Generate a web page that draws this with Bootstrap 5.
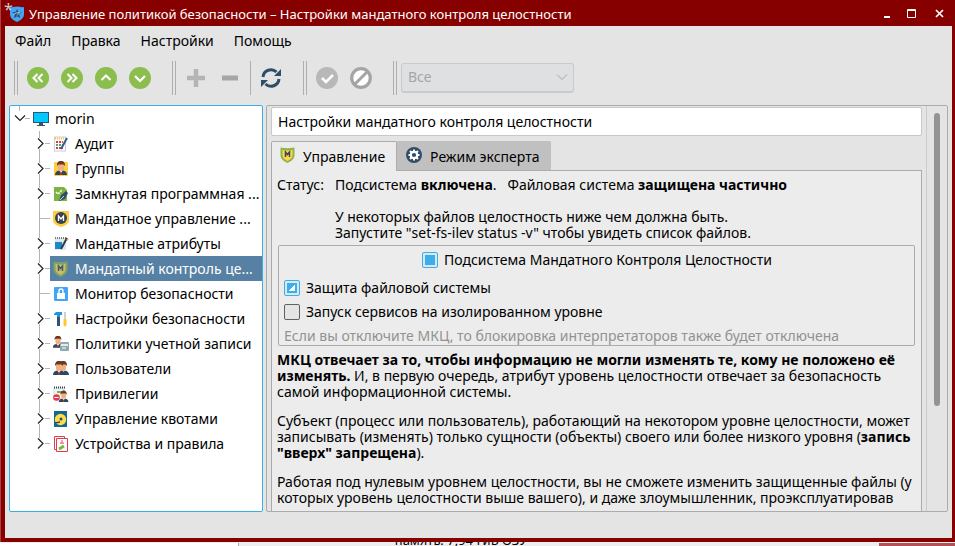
<!DOCTYPE html>
<html lang="ru">
<head>
<meta charset="utf-8">
<meta name="viewport" content="width=device-width, initial-scale=1">
<title>Управление политикой безопасности</title>
<link href="https://cdn.jsdelivr.net/npm/bootstrap@5.3.0/dist/css/bootstrap.min.css" rel="stylesheet">
<style>
:root{--win:#e4e4e4;--pane:#ececec;--edge:#acacac;--blue:#3daee9;--red:#870000}
body{font-family:"Noto Sans","DejaVu Sans",sans-serif;font-size:14px;line-height:16px;color:#000;background:var(--win)}
button{color:inherit;font:inherit}
svg{display:block;flex:none}
.window{min-height:0;background:var(--win);border:solid var(--red);border-width:0 3px 4px 4px;outline:1px solid #b04040;margin-left:1px}
.title-bar{background:var(--red);color:#fff;height:26px;margin-left:-4px;padding:2px 4px 0 0;font-size:13px;flex:none}
.modified{color:#ccc;left:3px;top:1px;font-size:16px}
.plain{background:none;border:0;padding:0}
.menu-bar{height:30px;padding:0 10px;gap:20px;flex:none}
.tool-bar{height:43px;padding:0 9px;flex:none}
.tool-bar .plain{width:24px;height:24px;display:flex;align-items:center;justify-content:center}
.tools{gap:10px}
.grip{width:4px;height:34px;border:solid #acaeb0;border-width:0 1px;margin:0 8px 0 20px}
.grip:first-child{margin-left:0}
.grip:nth-last-child(2){margin-right:4px}
.rule{width:1px;height:34px;background:#acaeb0;margin:0 8px}
.filter{--bs-form-select-bg-img:url("data:image/svg+xml,%3csvg xmlns='http://www.w3.org/2000/svg' viewBox='0 0 12 12'%3e%3cpath d='M1 3.500l5 5 5-5' fill='none' stroke='%23a4a6a8'/%3e%3c/svg%3e");width:173px;height:30px;padding:2px 6px;font-size:14px;line-height:16px;border:1px solid #c8cacc;border-bottom-width:2px;border-radius:3px;color:#a4a6a8;background-color:#dfe0e2!important;background-image:var(--bs-form-select-bg-img);background-position:right 5px center;background-size:12px;opacity:1}
.work{padding:6px 4px 0;gap:3px}
.tree{width:254px;background:#fff;border:1px solid var(--blue);border-radius:2px}
.tree li,.tree-row{height:25px}
.tree-row{width:100%;gap:6px;padding-left:3px;text-align:left;overflow:hidden;white-space:nowrap}
.chosen{background:#5681a4;color:#fff}
.frame{border:1px solid var(--edge);border-radius:2px;overflow:hidden}
.content{padding:1px 4px 0}
.heading-box{height:29px;padding:0 6px;border:1px solid #c8c8c8;border-radius:2px;font-size:14px;color:#000}
.heading-box:focus{box-shadow:none}
.tabs{margin-top:5px}
.tab{height:30px;gap:8px;padding:1px 11px 0 8px;border:1px solid var(--edge);border-bottom:0;border-radius:2px 2px 0 0}
.tab-on{background:var(--pane);margin-bottom:-1px;position:relative}
.tab-off{background:#c0c0c0;border-color:#c0c0c0;height:29px;border-radius:0 2px 0 0}
.sheet{background:var(--pane);border:1px solid var(--edge);padding:6px 6px 0 5px}
.state{gap:11px}
.group{border:1px solid var(--edge);border-radius:2px;margin:4px 0 6px 1px;height:101px;padding:6px 4px 0 5px}
.group .form-check{min-height:0;padding:0;margin:0 0 8px;gap:6px}
.group .form-check:first-child{margin-bottom:12px}
.group .form-check-input{width:16px;height:16px;margin:0;float:none;border:1px solid #5f6163;border-radius:2px;background-color:#e4e4e4;flex:none}
.group .form-check-input:checked{border-color:var(--blue);background:linear-gradient(var(--blue),var(--blue)) center/10px 10px no-repeat #d8e9f3}
.group .part:checked{background:linear-gradient(135deg,var(--blue) 50%,#fff 50%) center/6px 6px no-repeat,linear-gradient(var(--blue),var(--blue)) center/10px 10px no-repeat #d8e9f3}
.hint{color:#929292}
.prose p{margin-bottom:13px}
.scroll{width:21px;border-left:1px solid #ccc;padding:7px 0}
.thumb{width:6px;height:75%;border-radius:3px;background:#949494}
.status{height:26px;flex:none}
.behind{height:4px;padding-top:1px;background:#eee;overflow:hidden;flex:none}
.behind-a{width:25%;background:#fff;border-right:1px solid #aaa}
.behind-b{padding-left:156px;font-size:13px;line-height:16px;margin-top:-11px}
.behind-c{width:8%;background:#b35058}
</style>
<script src="https://cdn.jsdelivr.net/npm/bootstrap@5.3.0/dist/js/bootstrap.bundle.min.js"></script>
</head>
<body class="vh-100 d-flex flex-column overflow-hidden">
<svg width="0" height="0" class="position-absolute" aria-hidden="true">
<defs>
<g id="branch"><path d="M9.500 0v7M9.500 18v7M15 12.500h5" stroke="#b4b4b4" fill="none"/><path d="M8 7.500l5 5-5 5" stroke="#222" fill="none" stroke-width="1.200"/></g>
<g id="last"><path d="M9.500 0v7M15 12.500h5" stroke="#b4b4b4" fill="none"/><path d="M8 7.500l5 5-5 5" stroke="#222" fill="none" stroke-width="1.200"/></g>
<g id="leaf"><path d="M9.500 0v25M10 12.500h10" stroke="#b4b4b4" fill="none"/></g>
<g id="man"><path d="M1 15c0-3 2-4 4-4.500h4c2 .5 4 1.500 4 4.500z" fill="#2b4862"/><path d="M5 10h4l-2 3z" fill="#fff"/><path d="M7 11l1 4H6z" fill="#c33"/><rect x="4" y="3" width="6" height="8" rx="3" fill="#f2b07e"/><path d="M3 6c-.5-7 8.500-7 8 0L9.500 4.500h-5z" fill="#6b3a22"/></g>
<g id="mshield"><path d="M.5.5Q7.500 2 14.500.5V8c0 4-3 6-7 8C3.500 14 .5 12 .5 8z" fill="#8cb54c"/><path d="M2.500 2.800Q7.500 4 12.500 2.800V8c0 3-2 4.500-5 6-3-1.500-5-3-5-6z" fill="#ffd54a"/><path d="M5.500 10V5l2 2.500 2-2.500v5" fill="none" stroke="#34495e" stroke-width="1.500"/></g>
</defs>
</svg>

<main class="window flex-grow-1 d-flex flex-column">
<header class="title-bar d-flex align-items-center position-relative">
  <span class="modified position-absolute">*</span>
  <svg class="ms-2" width="16" height="16" viewBox="0 0 16 16"><path d="M1 1c3 .6 5-.4 7-.5 2 .1 4 1.100 7 .5v7c0 4-3 6-7 8-4-2-7-4-7-8z" fill="#42a5f5"/><path d="M8 3l1.400 3 3.400.3-2.500 2.300.8 3.400L8 10.300 4.900 12l.8-3.400-2.500-2.300L6.600 6z" fill="#2f4d68"/><path d="M4 9l3-2 4-.5-3 3" fill="none" stroke="#9dccec"/></svg>
  <span class="ms-1 flex-grow-1 text-nowrap">Управление политикой безопасности – Настройки мандатного контроля целостности</span>
  <button class="plain ms-2" aria-label="Свернуть"><svg width="20" height="20"><path d="M8 12h6v2H8z" fill="#fff"/></svg></button>
  <button class="plain ms-1" aria-label="Развернуть"><svg width="20" height="20"><path d="M7.500 5.500h8v8h-8zM7 6.500h9" fill="none" stroke="#fff"/></svg></button>
  <button class="plain ms-2" aria-label="Закрыть"><svg width="20" height="20"><path d="M8 6l7 7M15 6l-7 7" stroke="#fff" stroke-width="1.700"/></svg></button>
</header>

<nav class="menu-bar d-flex align-items-center">
  <button class="plain">Файл</button><button class="plain">Правка</button><button class="plain">Настройки</button><button class="plain">Помощь</button>
</nav>

<div class="tool-bar d-flex align-items-center">
  <div class="grip"></div>
  <div class="tools d-flex">
  <button class="plain" aria-label="В начало"><svg width="22" height="22" viewBox="0 0 22 22"><circle cx="11" cy="11" r="11" fill="#8bbd4f"/><path d="M10.500 7l-4 4 4 4M15.500 7l-4 4 4 4" fill="none" stroke="#fff" stroke-width="2"/></svg></button>
  <button class="plain" aria-label="В конец"><svg width="22" height="22" viewBox="0 0 22 22"><circle cx="11" cy="11" r="11" fill="#8bbd4f"/><path d="M6.500 7l4 4-4 4M11.500 7l4 4-4 4" fill="none" stroke="#fff" stroke-width="2"/></svg></button>
  <button class="plain" aria-label="Вверх"><svg width="22" height="22" viewBox="0 0 22 22"><circle cx="11" cy="11" r="11" fill="#8bbd4f"/><path d="M6.500 13L11 8.500l4.500 4.500" fill="none" stroke="#fff" stroke-width="2"/></svg></button>
  <button class="plain" aria-label="Вниз"><svg width="22" height="22" viewBox="0 0 22 22"><circle cx="11" cy="11" r="11" fill="#8bbd4f"/><path d="M6 9l5 5 5-5" fill="none" stroke="#fff" stroke-width="2.200"/></svg></button>
  </div>
  <div class="grip"></div>
  <div class="tools d-flex">
  <button class="plain" aria-label="Добавить"><svg width="20" height="20"><path d="M10 1v18M1 10h18" stroke="#b4b4b4" stroke-width="4.500"/></svg></button>
  <button class="plain" aria-label="Удалить"><svg width="20" height="20"><path d="M2 10h16" stroke="#a6a6a6" stroke-width="5"/></svg></button>
  </div>
  <div class="rule"></div>
  <button class="plain" aria-label="Обновить"><svg width="22" height="22" viewBox="0 0 22 22"><path d="M3 10a8 8 0 0 1 13.500-5M19 12a8 8 0 0 1-13.500 5" fill="none" stroke="#2f4d68" stroke-width="3"/><path d="M21 2v7h-7zM1 20v-7h7z" fill="#2f4d68"/></svg></button>
  <div class="grip"></div>
  <div class="tools d-flex">
  <button class="plain" aria-label="Применить"><svg width="22" height="22" viewBox="0 0 22 22"><circle cx="11" cy="11" r="11" fill="#b8b8b8"/><path d="M6 11l4 4 7-7" fill="none" stroke="#fff" stroke-width="2.500"/></svg></button>
  <button class="plain" aria-label="Отменить"><svg width="22" height="22" viewBox="0 0 22 22"><circle cx="11" cy="11" r="9.300" fill="#fff" stroke="#a4a4a4" stroke-width="3.200"/><path d="M5 17L17 5" stroke="#a4a4a4" stroke-width="3"/></svg></button>
  </div>
  <div class="grip"></div>
  <select class="form-select filter" disabled aria-label="Фильтр"><option>Все</option></select>
</div>

<div class="work d-flex flex-grow-1 overflow-hidden">
  <ul class="tree list-unstyled mb-0 flex-shrink-0">
    <li class="d-flex"><svg width="20" height="25"><path d="M9.500 0v5M15 12.500h5" stroke="#b4b4b4"/><path d="M5 9.500l5 5 5-5" stroke="#222" stroke-width="1.200" fill="none"/></svg>
      <button class="plain tree-row d-flex align-items-center"><svg width="16" height="16"><rect x=".5" y="1.500" width="15" height="10" fill="#00c8ff" stroke="#2f5570"/><path d="M6 12h4v2h2v1H4v-1h2z" fill="#2f5570"/></svg>morin</button></li>
    <li class="d-flex"><svg width="40" height="25"><use href="#branch" x="20"/></svg><button class="plain tree-row d-flex align-items-center"><svg width="16" height="16"><rect x="1.500" y="1" width="11" height="14" fill="#fff" stroke="#ccd"/><path d="M2 2.500h10" stroke="#f3c34f" stroke-width="2" stroke-dasharray="1 1"/><path d="M3 6h7M3 12h7" stroke="#e53935" stroke-width="2" stroke-dasharray="2 1"/><path d="M3 9h7" stroke="#45a67a" stroke-width="2" stroke-dasharray="2 1"/><path d="M14 2L8 13" stroke="#2f628a" stroke-width="2"/></svg>Аудит</button></li>
    <li class="d-flex"><svg width="40" height="25"><use href="#branch" x="20"/></svg><button class="plain tree-row d-flex align-items-center"><svg width="16" height="16"><rect x="1" y="1" width="14" height="14" rx="1" fill="#ffcc45"/><use href="#man" x="1" y="-1"/></svg>Группы</button></li>
    <li class="d-flex"><svg width="40" height="25"><use href="#branch" x="20"/></svg><button class="plain tree-row d-flex align-items-center"><svg width="16" height="16"><path d="M1 1h10l3 3v11H1z" fill="#7cb342"/><path d="M3 6l2 2 4-4" fill="none" stroke="#fff" stroke-width="1.500" stroke-dasharray="2 1"/><path d="M6 15l2-6 5-4 2 2-3 6z" fill="#2f4d68"/><path d="M7 14l4-4" stroke="#c9dbe6"/></svg>Замкнутая программная ...</button></li>
    <li class="d-flex"><svg width="40" height="25"><use href="#leaf" x="20"/></svg><button class="plain tree-row d-flex align-items-center"><svg width="16" height="16"><path d="M0 0h16v9c0 4-5 6-8 7-3-1-8-3-8-7z" fill="#ffcc3c"/><circle cx="8" cy="7" r="6" fill="#37444e"/><path d="M5.500 10V5L8 8l2.500-3v5" fill="none" stroke="#fff" stroke-width="1.300"/></svg>Мандатное управление ...</button></li>
    <li class="d-flex"><svg width="40" height="25"><use href="#branch" x="20"/></svg><button class="plain tree-row d-flex align-items-center"><svg width="16" height="16"><path d="M2 2h11v12H2z" fill="#dce9ee"/><path d="M2 2h11" stroke="#777" stroke-width="2" stroke-dasharray="1 1"/><path d="M2 6h7v7H2z" fill="#1e88c8"/><path d="M14 2L8 13" stroke="#293d50" stroke-width="2"/><path d="M14 3l1 1" stroke="#f4a340" stroke-width="2"/></svg>Мандатные атрибуты</button></li>
    <li class="d-flex"><svg width="40" height="25"><use href="#branch" x="20"/></svg><button class="plain tree-row chosen d-flex align-items-center"><svg width="16" height="16"><g opacity=".7"><use href="#mshield"/></g></svg>Мандатный контроль це...</button></li>
    <li class="d-flex"><svg width="40" height="25"><use href="#leaf" x="20"/></svg><button class="plain tree-row d-flex align-items-center"><svg width="16" height="16"><rect x="1" y="1" width="14" height="14" rx="1" fill="#42a5f5"/><path d="M6 7V5a2 2 0 0 1 4 0v2" fill="none" stroke="#fff" stroke-width="1.400"/><rect x="4" y="7" width="8" height="6" fill="#fff"/></svg>Монитор безопасности</button></li>
    <li class="d-flex"><svg width="40" height="25"><use href="#branch" x="20"/></svg><button class="plain tree-row d-flex align-items-center"><svg width="16" height="16"><path d="M1 3l2-2h6v3H7v2H4V4H1z" fill="#2196dc"/><path d="M4 6h3v9H4z" fill="#2f5570"/><path d="M12 1v7" stroke="#b9c5cc" stroke-width="1.500"/><path d="M10.500 8h3v6l-1.500 2-1.500-2z" fill="#ffc928"/></svg>Настройки безопасности</button></li>
    <li class="d-flex"><svg width="40" height="25"><use href="#branch" x="20"/></svg><button class="plain tree-row d-flex align-items-center"><svg width="16" height="16"><g transform="translate(-1 -1) scale(.85)"><use href="#man"/></g><rect x="7" y="6" width="9" height="9" rx="1" fill="#91a9b2"/><path d="M8 8h7v2H8z" fill="#e3edf0"/><path d="M9 12h5" stroke="#fff"/><path d="M13 12h1" stroke="#7cb342" stroke-width="2"/></svg>Политики учетной записи</button></li>
    <li class="d-flex"><svg width="40" height="25"><use href="#branch" x="20"/></svg><button class="plain tree-row d-flex align-items-center"><svg width="16" height="16"><use href="#man" x="3" y="-1"/><use href="#man" x="-1" y="-1"/></svg>Пользователи</button></li>
    <li class="d-flex"><svg width="40" height="25"><use href="#branch" x="20"/></svg><button class="plain tree-row d-flex align-items-center"><svg width="16" height="16"><path d="M1 2h10v12H1z" fill="#eef3f4" stroke="#cdd"/><path d="M1 1.500h11" stroke="#34495e" stroke-width="2" stroke-dasharray="1 1"/><path d="M4 6h5" stroke="#7cb342" stroke-width="2"/><g transform="translate(5 4) scale(.8)"><use href="#man"/></g><circle cx="3.500" cy="11.500" r="3.300" fill="#e53950"/><path d="M1.500 11.500h4" stroke="#fff"/></svg>Привилегии</button></li>
    <li class="d-flex"><svg width="40" height="25"><use href="#branch" x="20"/></svg><button class="plain tree-row d-flex align-items-center"><svg width="16" height="16"><rect x="1" y="0" width="13" height="16" fill="#14698f"/><circle cx="7.500" cy="8.500" r="5.700" fill="#ffdc4b"/><circle cx="8" cy="8" r="1.500" fill="#2f4d68"/><path d="M2 12l5-1" stroke="#34495e" stroke-width="1.500"/></svg>Управление квотами</button></li>
    <li class="d-flex"><svg width="40" height="25"><use href="#last" x="20"/></svg><button class="plain tree-row d-flex align-items-center"><svg width="16" height="16"><path d="M1.500.5h10v13h-10z" fill="#fff" stroke="#e53950"/><path d="M3.500 2.500h11v13h-11z" fill="#fff" stroke="#e53950"/><path d="M9 4v4M7 7h4" stroke="#f08390" stroke-width="1.500"/><path d="M6 13l5-3" stroke="#7cb342" stroke-width="3"/></svg>Устройства и правила</button></li>
  </ul>

  <section class="frame d-flex flex-grow-1">
    <div class="content flex-grow-1">
      <input class="form-control heading-box" type="text" readonly value="Настройки мандатного контроля целостности" aria-label="Раздел">
      <div class="tabs d-flex align-items-start" role="tablist">
        <button class="tab tab-on d-flex align-items-center" role="tab" aria-selected="true"><svg width="15" height="20"><use href="#mshield"/></svg>Управление</button>
        <button class="tab tab-off d-flex align-items-center" role="tab"><svg width="16" height="20"><circle cx="8" cy="8" r="8" fill="#2f4d68"/><circle cx="8" cy="8" r="3.200" fill="none" stroke="#fff" stroke-width="2.200"/><path d="M8 2.500v2M8 11.500v2M2.500 8h2M11.500 8h2M4 4l1.500 1.500M10.500 10.500L12 12M12 4l-1.500 1.500M5.500 10.500L4 12" stroke="#fff" stroke-width="2"/></svg>Режим эксперта</button>
      </div>
      <div class="sheet">
        <div class="state d-flex"><span>Статус:</span><div>Подсистема <b>включена</b>. &nbsp; Файловая система <b>защищена частично</b><br><br>У некоторых файлов целостность ниже чем должна быть.<br>Запустите "set-fs-ilev status -v" чтобы увидеть список файлов.</div></div>
        <div class="group">
          <div class="form-check d-flex align-items-center justify-content-center"><input class="form-check-input" type="checkbox" id="mic" checked><label for="mic">Подсистема Мандатного Контроля Целостности</label></div>
          <div class="form-check d-flex align-items-center"><input class="form-check-input part" type="checkbox" id="fs" checked><label for="fs">Защита файловой системы</label></div>
          <div class="form-check d-flex align-items-center"><input class="form-check-input" type="checkbox" id="srv"><label for="srv">Запуск сервисов на изолированном уровне</label></div>
          <div class="hint">Если вы отключите МКЦ, то блокировка интерпретаторов также будет отключена</div>
        </div>
        <div class="prose">
          <p><b>МКЦ отвечает за то, чтобы информацию не могли изменять те, кому не положено её изменять.</b> И, в первую очередь, атрибут уровень целостности отвечает за безопасность самой информационной системы.</p>
          <p>Субъект (процесс или пользователь), работающий на некотором уровне целостности, может записывать (изменять) только сущности (объекты) своего или более низкого уровня (<b>запись "вверх" запрещена</b>).</p>
          <p>Работая под нулевым уровнем целостности, вы не сможете изменить защищенные файлы (у которых уровень целостности выше вашего), и даже злоумышленник, проэксплуатировав</p>
        </div>
      </div>
    </div>
    <div class="scroll d-flex justify-content-center flex-shrink-0"><div class="thumb"></div></div>
  </section>
</div>
<footer class="status"></footer>
</main>
<div class="behind d-flex"><div class="behind-a"></div><div class="behind-b flex-grow-1">память: 7,94 ГиБ ОЗУ</div><div class="behind-c"></div></div>
</body>
</html>
